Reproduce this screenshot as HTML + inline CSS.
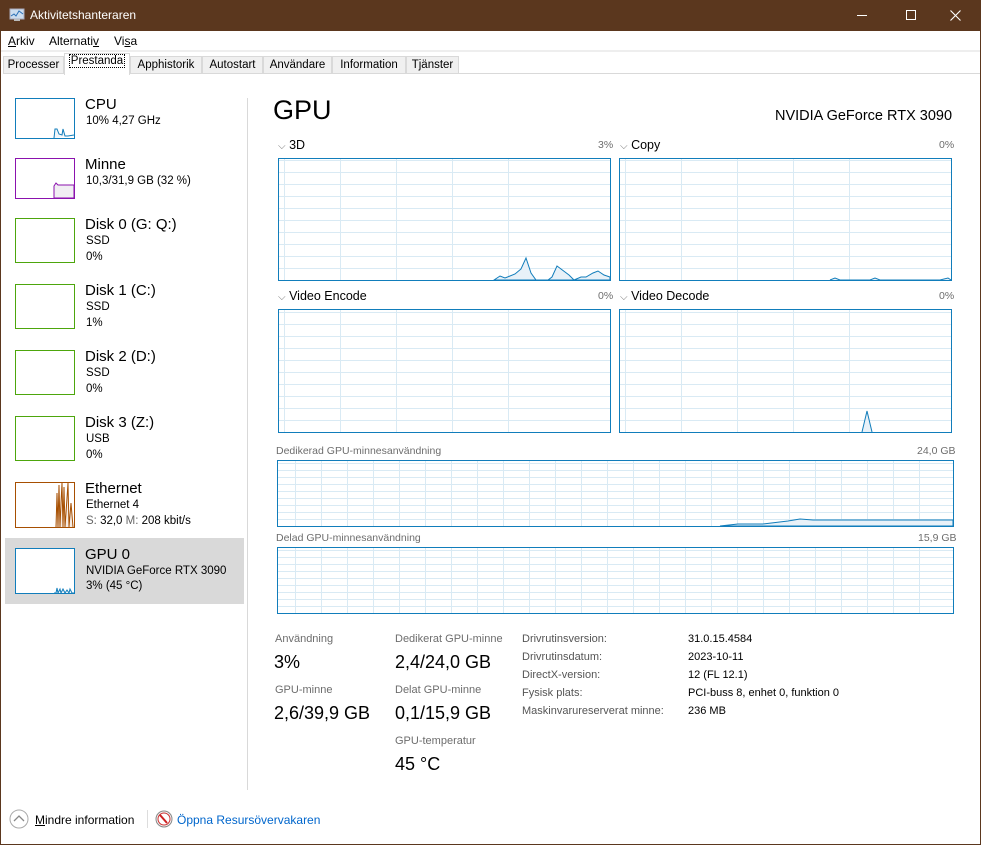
<!DOCTYPE html>
<html><head><meta charset="utf-8"><style>
*{margin:0;padding:0;box-sizing:border-box}
body{width:981px;height:845px;position:relative;background:#fff;font-family:"Segoe UI","Liberation Sans",sans-serif;color:#000;overflow:hidden}
.a{position:absolute;white-space:nowrap}
.title{left:0;top:0;width:981px;height:31px;background:#5b371e;color:#fff}
.bl{left:0;top:31px;width:1px;height:814px;background:#5b371e}
.br{right:0;top:31px;width:1px;height:814px;background:#5b371e}
.bb{left:0;bottom:0;width:981px;height:1px;background:#5b371e}
.menu{font-size:12px;top:34px}
.tabs{top:55px;left:5px;height:19px;border-bottom:1px solid #d9d9d9;width:975px}
.tab{position:absolute;top:56px;height:18px;background:#f0f0f0;border:1px solid #d9d9d9;font-size:11.5px;padding:2px 0 0 0;text-align:center;color:#000;overflow:hidden}
.th{border:1px solid;background:#fff}
.sn{font-size:15px}
.ss{font-size:11.5px}
.g{border:1px solid #117dbb;background-color:#fff}
.lbl{font-size:12.5px}
.sm{font-size:10.5px;color:#6d6d6d}
.st{font-size:11px;color:#6d6d6d}
.sv{font-size:18px}
.dk{font-size:11px;color:#555}
</style></head><body>
<div class="a title"></div>
<svg class="a" style="left:9px;top:8px" width="16" height="14"><rect x="1" y="1" width="14" height="10" fill="#cde" stroke="#aab"/><polyline points="2,8 5,6 7,8 10,3 14,6" fill="none" stroke="#2a6fb5"/><rect x="5" y="11" width="6" height="2" fill="#bbb"/></svg>
<div class="a" style="left:30px;top:8px;color:#fff;font-size:12px">Aktivitetshanteraren</div>
<div class="a" style="left:857px;top:15px;width:10px;height:1px;background:#fff"></div>
<div class="a" style="left:906px;top:10px;width:10px;height:10px;border:1px solid #fff"></div>
<svg class="a" style="left:950px;top:10px" width="11" height="11"><path d="M0.5 0.5L10.5 10.5M10.5 0.5L0.5 10.5" stroke="#fff" stroke-width="1.1"/></svg>
<div class="a bl"></div><div class="a br"></div><div class="a bb"></div>
<div class="a menu" style="left:8px"><u>A</u>rkiv</div>
<div class="a menu" style="left:49px">Alternati<u>v</u></div>
<div class="a menu" style="left:114px">Vi<u>s</u>a</div>
<div class="a" style="left:1px;top:50px;width:979px;height:2px;background:#eee"></div>
<div class="a tabs"></div>
<div class="tab" style="left:3px;width:61px">Processer</div>
<div class="tab" style="left:64px;top:53px;height:22px;width:66px;background:#fff;border-bottom:none;padding-top:1px"><span style="outline:1px dotted #000;padding:0 1px">Prestanda</span></div>
<div class="tab" style="left:130px;width:72px">Apphistorik</div>
<div class="tab" style="left:202px;width:61px">Autostart</div>
<div class="tab" style="left:263px;width:69px">Användare</div>
<div class="tab" style="left:332px;width:74px">Information</div>
<div class="tab" style="left:406px;width:53px">Tjänster</div>

<!-- sidebar -->
<div class="a" style="left:5px;top:538px;width:239px;height:66px;background:#d9d9d9"></div>
<div class="a" style="left:247px;top:98px;width:1px;height:692px;background:#d9d9d9"></div>

<div class="a th" style="left:15px;top:98px;width:60px;height:41px;border-color:#117dbb"><svg width="58" height="39"><polyline points="38,39 39,30 41,30 43,35 46,36 47,30 49,37 52,37 58,36" fill="#f1f6fa" stroke="#117dbb"/></svg></div>
<div class="a sn" style="left:85px;top:96px">CPU</div>
<div class="a ss" style="left:86px;top:115px">10% 4,27 GHz</div>

<div class="a th" style="left:15px;top:158px;width:60px;height:41px;border-color:#8b12ae"><svg width="58" height="39"><polygon points="38,39 38,27 40,24 42,26 58,26 58,39" fill="#f1eef3" stroke="#8b12ae"/></svg></div>
<div class="a sn" style="left:85px;top:156px">Minne</div>
<div class="a ss" style="left:86px;top:175px">10,3/31,9 GB (32 %)</div>

<div class="a th" style="left:15px;top:218px;width:60px;height:45px;border-color:#4da60c"></div>
<div class="a sn" style="left:85px;top:216px">Disk 0 (G: Q:)</div>
<div class="a ss" style="left:86px;top:235px">SSD</div><div class="a ss" style="left:86px;top:251px">0%</div>

<div class="a th" style="left:15px;top:284px;width:60px;height:45px;border-color:#4da60c"></div>
<div class="a sn" style="left:85px;top:282px">Disk 1 (C:)</div>
<div class="a ss" style="left:86px;top:301px">SSD</div><div class="a ss" style="left:86px;top:317px">1%</div>

<div class="a th" style="left:15px;top:350px;width:60px;height:45px;border-color:#4da60c"></div>
<div class="a sn" style="left:85px;top:348px">Disk 2 (D:)</div>
<div class="a ss" style="left:86px;top:367px">SSD</div><div class="a ss" style="left:86px;top:383px">0%</div>

<div class="a th" style="left:15px;top:416px;width:60px;height:45px;border-color:#4da60c"></div>
<div class="a sn" style="left:85px;top:414px">Disk 3 (Z:)</div>
<div class="a ss" style="left:86px;top:433px">USB</div><div class="a ss" style="left:86px;top:449px">0%</div>

<div class="a th" style="left:15px;top:482px;width:60px;height:46px;border-color:#a74f01"><svg width="58" height="44"><polyline points="40,44 41,10 42,44 43,2 44,44 45,20 46,0 47,44 48,4 49,44 50,30 52,0 53,44 55,20 57,44" fill="#f6ece4" stroke="#a74f01"/></svg></div>
<div class="a sn" style="left:85px;top:480px">Ethernet</div>
<div class="a ss" style="left:86px;top:499px">Ethernet 4</div>
<div class="a ss" style="left:86px;top:515px"><span style="color:#666">S:</span> 32,0 <span style="color:#666">M:</span> 208 kbit/s</div>

<div class="a th" style="left:15px;top:548px;width:60px;height:46px;border-color:#117dbb"><svg width="58" height="44"><polyline points="38,44 40,44 41,39 42,44 44,40 45,44 47,40 49,44 51,41 53,44 54,40 56,44 58,44" fill="#f1f6fa" stroke="#117dbb"/></svg></div>
<div class="a sn" style="left:85px;top:546px">GPU 0</div>
<div class="a ss" style="left:86px;top:565px">NVIDIA GeForce RTX 3090</div>
<div class="a ss" style="left:86px;top:580px">3% (45 °C)</div>

<!-- main -->
<div class="a" style="left:273px;top:95px;font-size:27px">GPU</div>
<div class="a" style="left:775px;top:108px;font-size:14.5px">NVIDIA GeForce RTX 3090</div>

<div class="a lbl" style="left:278px;top:138px"><span style="color:#777;font-size:10px">⌵</span> 3D</div>
<div class="a sm" style="left:598px;top:139px">3%</div>
<div class="a lbl" style="left:620px;top:138px"><span style="color:#777;font-size:10px">⌵</span> Copy</div>
<div class="a sm" style="left:939px;top:139px">0%</div>
<div class="a lbl" style="left:278px;top:289px"><span style="color:#777;font-size:10px">⌵</span> Video Encode</div>
<div class="a sm" style="left:598px;top:290px">0%</div>
<div class="a lbl" style="left:620px;top:289px"><span style="color:#777;font-size:10px">⌵</span> Video Decode</div>
<div class="a sm" style="left:939px;top:290px">0%</div>

<div class="a g" style="left:278px;top:158px;width:333px;height:123px;background-image:repeating-linear-gradient(0deg,transparent 0 11px,#d9eaf4 11px 12px),repeating-linear-gradient(90deg,transparent 0 55px,#d9eaf4 55px 56px);background-position:0 0,-50px 0"><svg width="331" height="121" style="position:absolute;left:0;top:0"><polygon points="215,121 221,117 226,119 236,115 242,110 247,99 252,114 257,121 269,121 273,118 278,107 290,116 295,121 302,118 307,118 314,114 319,112 325,116 331,118 331,121" fill="#e8f1f8" stroke="#117dbb"/></svg></div>
<div class="a g" style="left:619px;top:158px;width:333px;height:123px;background-image:repeating-linear-gradient(0deg,transparent 0 11px,#d9eaf4 11px 12px),repeating-linear-gradient(90deg,transparent 0 55px,#d9eaf4 55px 56px);background-position:0 0,-50px 0"><svg width="331" height="121" style="position:absolute;left:0;top:0"><polyline points="210,121 215,119 220,121 250,121 255,119 260,121 320,121 328,119 331,121" fill="#e8f1f8" stroke="#117dbb"/></svg></div>
<div class="a g" style="left:278px;top:309px;width:333px;height:124px;background-image:repeating-linear-gradient(0deg,transparent 0 11px,#d9eaf4 11px 12px),repeating-linear-gradient(90deg,transparent 0 55px,#d9eaf4 55px 56px);background-position:0 0,-50px 0"></div>
<div class="a g" style="left:619px;top:309px;width:333px;height:124px;background-image:repeating-linear-gradient(0deg,transparent 0 11px,#d9eaf4 11px 12px),repeating-linear-gradient(90deg,transparent 0 55px,#d9eaf4 55px 56px);background-position:0 0,-50px 0"><svg width="331" height="122" style="position:absolute;left:0;top:0"><polyline points="242,122 247,101 252,122" fill="#e8f1f8" stroke="#117dbb"/></svg></div>

<div class="a sm" style="left:276px;top:445px">Dedikerad GPU-minnesanvändning</div>
<div class="a sm" style="left:917px;top:445px">24,0 GB</div>
<div class="a g" style="left:277px;top:460px;width:677px;height:67px;background-image:repeating-linear-gradient(0deg,transparent 0 6px,#d9eaf4 6px 7px),repeating-linear-gradient(90deg,transparent 0 25px,#d9eaf4 25px 26px);background-position:0 0,-8px 0"><svg width="675" height="65" style="position:absolute;left:0;top:0"><polygon points="442,65 460,63 485,63 510,60 522,58 535,59 675,59 675,65" fill="#e8f1f8" stroke="#117dbb"/></svg></div>
<div class="a sm" style="left:276px;top:532px">Delad GPU-minnesanvändning</div>
<div class="a sm" style="left:918px;top:532px">15,9 GB</div>
<div class="a g" style="left:277px;top:547px;width:677px;height:67px;background-image:repeating-linear-gradient(0deg,transparent 0 6px,#d9eaf4 6px 7px),repeating-linear-gradient(90deg,transparent 0 25px,#d9eaf4 25px 26px);background-position:0 0,-8px 0"></div>

<div class="a st" style="left:275px;top:633px">Användning</div>
<div class="a sv" style="left:274px;top:652px">3%</div>
<div class="a st" style="left:275px;top:684px">GPU-minne</div>
<div class="a sv" style="left:274px;top:703px">2,6/39,9 GB</div>
<div class="a st" style="left:395px;top:633px">Dedikerat GPU-minne</div>
<div class="a sv" style="left:395px;top:652px">2,4/24,0 GB</div>
<div class="a st" style="left:395px;top:684px">Delat GPU-minne</div>
<div class="a sv" style="left:395px;top:703px">0,1/15,9 GB</div>
<div class="a st" style="left:395px;top:735px">GPU-temperatur</div>
<div class="a sv" style="left:395px;top:754px">45 °C</div>

<div class="a dk" style="left:522px;top:630px;line-height:18px">Drivrutinsversion:<br>Drivrutinsdatum:<br>DirectX-version:<br>Fysisk plats:<br>Maskinvarureserverat minne:</div>
<div class="a" style="left:688px;top:630px;line-height:18px;font-size:11px">31.0.15.4584<br>2023-10-11<br>12 (FL 12.1)<br>PCI-buss 8, enhet 0, funktion 0<br>236 MB</div>

<!-- footer -->
<svg class="a" style="left:9px;top:809px" width="20" height="20"><circle cx="10" cy="10" r="9" fill="none" stroke="#aaa"/><polyline points="5,12 10,7 15,12" fill="none" stroke="#888" stroke-width="1.3"/></svg>
<div class="a" style="left:35px;top:813px;font-size:12px"><u>M</u>indre information</div>
<div class="a" style="left:147px;top:810px;width:1px;height:18px;background:#ddd"></div>
<svg class="a" style="left:155px;top:810px" width="18" height="18"><circle cx="9" cy="9" r="8" fill="#f4f4f4" stroke="#888"/><circle cx="9" cy="9" r="6" fill="#fff" stroke="#c33"/><line x1="5" y1="5" x2="12" y2="13" stroke="#c22" stroke-width="2"/></svg>
<div class="a" style="left:177px;top:813px;font-size:12px;color:#0066cc">Öppna Resursövervakaren</div>
</body></html>
